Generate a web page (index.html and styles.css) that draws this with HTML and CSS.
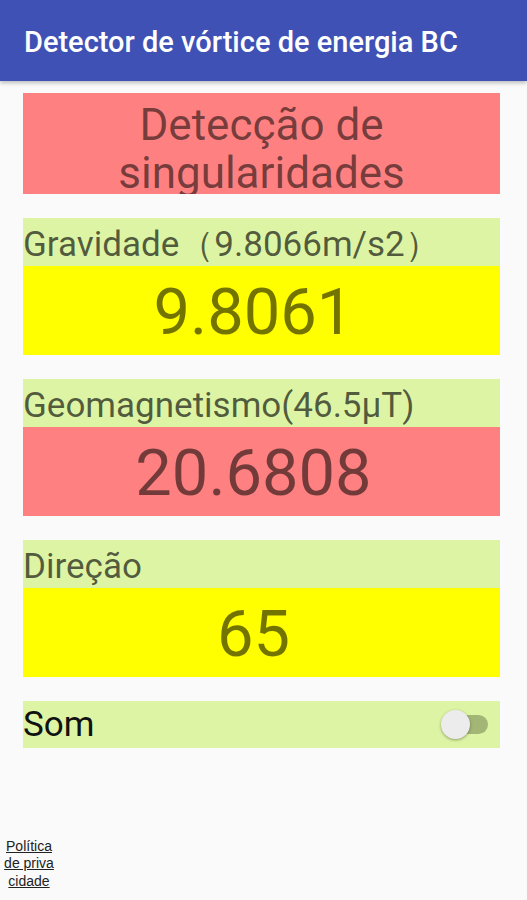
FILE: index.html
```html
<!DOCTYPE html>
<html lang="pt">
<head>
  <meta charset="UTF-8">
  <meta name="viewport" content="width=device-width, initial-scale=1.0">
  <title>Detector de vórtice de energia BC</title>
  <link rel="stylesheet" href="styles.css">
</head>
<body>
  <div class="page">
    <header class="appbar">Detector de vórtice de energia BC</header>

    <main class="content">
      <div class="status red">Detecção de singularidades</div>

      <section class="sensor">
        <div class="label">Gravidade（9.8066m/s2）</div>
        <div class="value yellow">9.8061</div>
      </section>

      <section class="sensor">
        <div class="label">Geomagnetismo(46.5μT)</div>
        <div class="value red">20.6808</div>
      </section>

      <section class="sensor">
        <div class="label">Direção</div>
        <div class="value yellow">65</div>
      </section>

      <div class="sound">
        <span>Som</span>
        <span class="switch"><span class="thumb"></span></span>
      </div>
    </main>

    <footer class="footer">
      <a href="#" class="privacy">Política de privacidade</a>
    </footer>
  </div>
</body>
</html>
```

FILE: styles.css
```css
body {
  margin: 0;
  background-color: #fafafa;
  font-family: Roboto, 'Noto Sans', sans-serif;
}
.page {
  display: flex;
  flex-direction: column;
  min-height: 900px;
}
.appbar {
  height: 81px;
  box-sizing: border-box;
  padding: 25px 0 0 24px;
  background-color: #3f51b5;
  color: white;
  font-size: 29px;
  font-weight: 500;
  line-height: 34px;
  white-space: nowrap;
  box-shadow: 0 2px 4px rgba(0,0,0,0.25);
}
.content {
  display: flex;
  flex-direction: column;
  gap: 24px;
  padding: 12px 27px 0 23px;
}
.status {
  height: 101px;
  box-sizing: border-box;
  padding-top: 8px;
  overflow: hidden;
  text-align: center;
  font-size: 44px;
  line-height: 48px;
  color: rgba(0,0,0,0.55);
}
.red {
  background-color: #ff8080;
}
.yellow {
  background-color: #ffff00;
}
.sensor {
  display: flex;
  flex-direction: column;
}
.label {
  height: 48px;
  box-sizing: border-box;
  padding-top: 6px;
  background-color: #ddf4a4;
  color: rgba(0,0,0,0.64);
  font-size: 35px;
  line-height: 42px;
  white-space: nowrap;
}
.value {
  height: 89px;
  box-sizing: border-box;
  padding: 4px 16px 0 0;
  text-align: center;
  font-size: 65px;
  line-height: 85px;
  color: rgba(0,0,0,0.55);
}
.sound {
  height: 47px;
  display: flex;
  align-items: center;
  justify-content: space-between;
  padding-right: 12px;
  background-color: #ddf4a4;
  font-size: 35px;
  color: #111;
}
.switch {
  position: relative;
  width: 37px;
  height: 19px;
  border-radius: 10px;
  background-color: #a3b676;
}
.thumb {
  position: absolute;
  left: -10px;
  top: -5px;
  width: 29px;
  height: 29px;
  border-radius: 50%;
  background-color: #ececec;
  box-shadow: 0 1px 3px rgba(0,0,0,0.35);
}
.footer {
  margin-top: auto;
  padding: 0 0 10px 1px;
}
.privacy {
  display: block;
  width: 56px;
  text-align: center;
  word-break: break-all;
  font-family: 'Liberation Sans', Arial, sans-serif;
  font-size: 14px;
  line-height: 17.5px;
  color: #222;
}
```
